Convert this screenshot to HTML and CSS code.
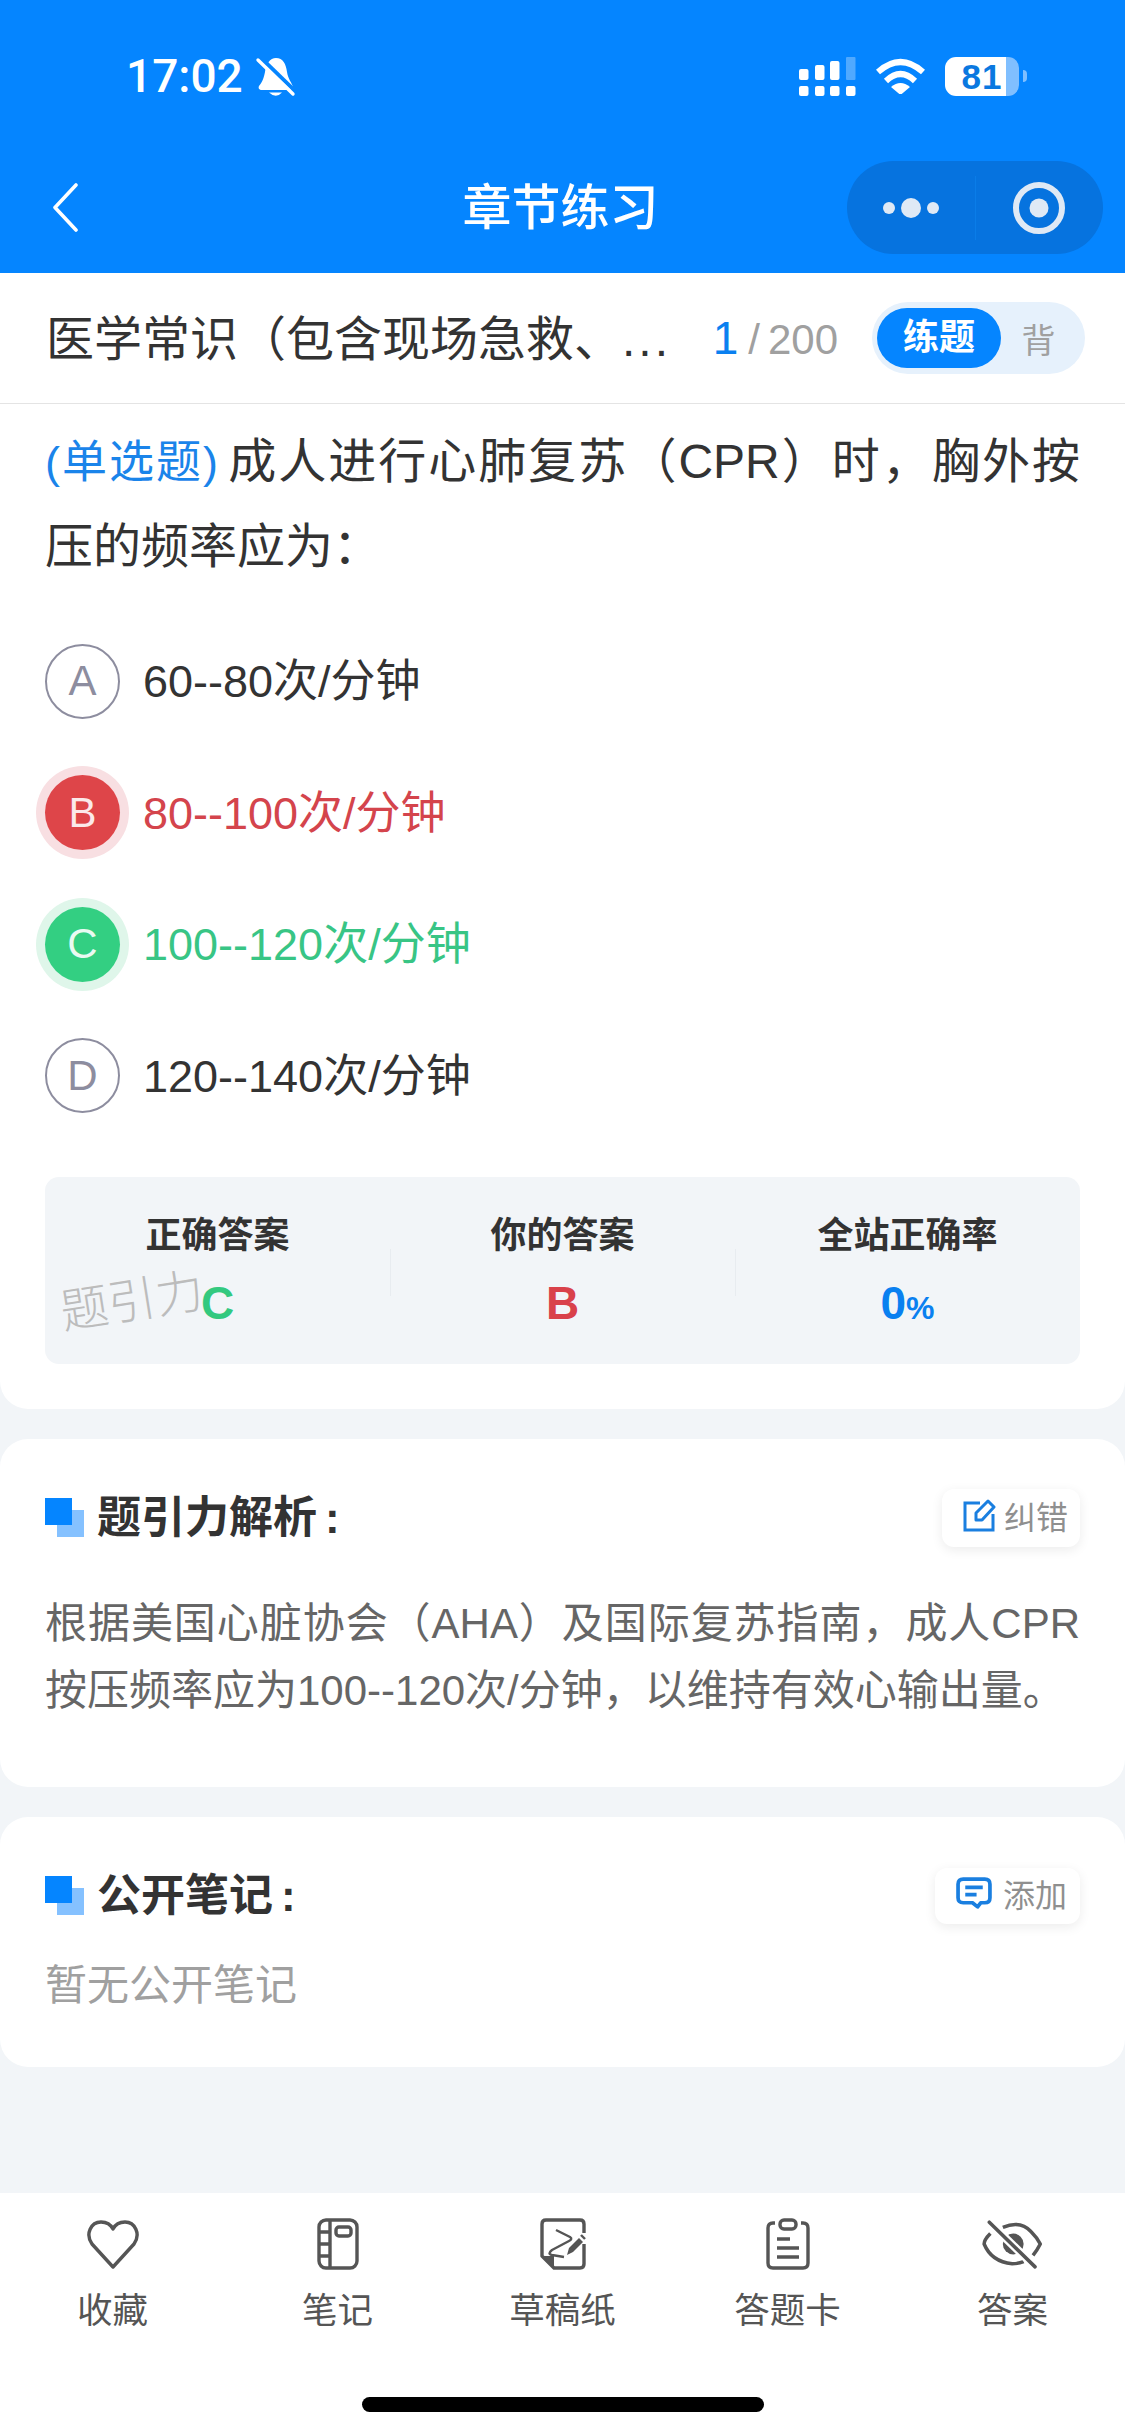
FILE: index.html
```html
<!DOCTYPE html>
<html lang="zh-CN">
<head>
    <meta charset="UTF-8">
    <meta name="viewport" content="width=device-width, initial-scale=1.0">
    <title>章节练习</title>
    <link rel="stylesheet" href="styles.css">
</head>
<body>
    <header class="topbar">
        <div class="status">
            <div class="status-left">
                <span class="time">17:02</span>
                <svg class="bell" viewBox="0 0 70 60">
                    <path fill="#fff" d="M36 12C43 12 46 18 47 26C48 33 52 37 53 41C53 43 52 44 50 44L22 44C19 44 18 42 19 40C23 35 24 31 25 26C26 18 30 12 36 12Z"/>
                    <path fill="#fff" d="M29 46.500Q36 53 42 46.500Z"/>
                    <path stroke="#0585ff" stroke-width="4" d="M21 12L56 46"/>
                    <path stroke="#fff" stroke-width="3.400" stroke-linecap="round" d="M18 14L53 48"/>
                </svg>
            </div>
            <div class="status-right">
                <svg class="signal" viewBox="0 0 57 39" fill="#fff">
                    <rect x="0" y="12" width="9.500" height="11" rx="2"/>
                    <rect x="16" y="8" width="9.500" height="15" rx="2"/>
                    <rect x="31" y="4" width="9.500" height="19" rx="2"/>
                    <rect x="47" y="0" width="9.500" height="23" rx="1" fill-opacity="0.3"/>
                    <rect x="0" y="29" width="9.500" height="10" rx="2"/>
                    <rect x="16" y="29" width="9.500" height="10" rx="2"/>
                    <rect x="31" y="29" width="9.500" height="10" rx="2"/>
                    <rect x="47" y="29" width="9.500" height="10" rx="2"/>
                </svg>
                <svg class="wifi" viewBox="0 0 51 36" fill="none" stroke="#fff" stroke-width="6">
                    <path d="M3 14Q25.500 -6 48 14"/>
                    <path d="M11 23Q25.500 9 40 23"/>
                    <path fill="#fff" stroke="none" d="M16 29Q25.500 21 35 29L25.500 37Z"/>
                </svg>
                <div class="battery"><span class="battery-level">81</span></div>
                <span class="battery-tip"></span>
            </div>
        </div>
        <nav class="navbar">
            <svg class="back" viewBox="0 0 26 49" fill="none" stroke="#fff" stroke-width="3.600" stroke-linecap="round" stroke-linejoin="round">
                <path d="M24 2L3 24.500L24 47"/>
            </svg>
            <h1 class="nav-title">章节练习</h1>
            <div class="capsule">
                <svg class="capsule-more" viewBox="0 0 64 20" fill="#dfe9f5">
                    <circle cx="10" cy="10" r="6"/>
                    <circle cx="32" cy="10" r="10"/>
                    <circle cx="54" cy="10" r="6"/>
                </svg>
                <svg class="capsule-close" viewBox="0 0 52 52" fill="none" stroke="#dfe9f5" stroke-width="6">
                    <circle cx="26" cy="26" r="23"/>
                    <circle cx="26" cy="26" r="9.500" fill="#dfe9f5" stroke="none"/>
                </svg>
            </div>
        </nav>
    </header>

    <div class="subbar">
        <div class="chapter">医学常识（包含现场急救、<span class="chapter-more">...</span></div>
        <div class="counter"><span class="counter-now">1</span><span class="counter-slash">/</span>200</div>
        <div class="mode">
            <span class="mode-on">练题</span>
            <span class="mode-off">背</span>
        </div>
    </div>

    <section class="question">
        <p class="stem"><span class="stem-type">(单选题)</span>成人进行心肺复苏（CPR）时，胸外按压的频率应为：</p>
        <ul class="options">
            <li class="option"><span class="letter">A</span><span class="option-text">60--80次/分钟</span></li>
            <li class="option wrong"><span class="letter">B</span><span class="option-text">80--100次/分钟</span></li>
            <li class="option right"><span class="letter">C</span><span class="option-text">100--120次/分钟</span></li>
            <li class="option"><span class="letter">D</span><span class="option-text">120--140次/分钟</span></li>
        </ul>
        <div class="stats">
            <div class="stat">
                <div class="stat-label">正确答案</div>
                <div class="stat-value green">C</div>
            </div>
            <div class="stat">
                <div class="stat-label">你的答案</div>
                <div class="stat-value red">B</div>
            </div>
            <div class="stat">
                <div class="stat-label">全站正确率</div>
                <div class="stat-value blue">0<small>%</small></div>
            </div>
            <span class="watermark">题引力</span>
        </div>
    </section>

    <section class="card">
        <div class="card-head">
            <h2 class="card-title"><span class="squares"></span>题引力解析<span class="colon">:</span></h2>
            <a class="mini-btn">
                <svg class="mini-icon" viewBox="0 0 33 33" fill="none" stroke="#1a7fe0" stroke-width="3">
                    <path d="M17 4H2V31H30V15"/>
                    <path stroke-linejoin="round" d="M13 21V14L25 2L31 8L19 21Z"/>
                </svg>
                纠错
            </a>
        </div>
        <p class="analysis">根据美国心脏协会（AHA）及国际复苏指南，成人CPR按压频率应为100--120次/分钟，以维持有效心输出量。</p>
    </section>

    <section class="card notes">
        <div class="card-head">
            <h2 class="card-title"><span class="squares"></span>公开笔记<span class="colon">:</span></h2>
            <a class="mini-btn add">
                <svg class="mini-icon wide" viewBox="0 0 35 31" fill="none" stroke="#1a7fe0" stroke-width="3.600" stroke-linejoin="round">
                    <path d="M7 2H28Q33 2 33 7V20Q33 25 28 25H24L21 29L16 25H7Q2 25 2 20V7Q2 2 7 2Z"/>
                    <path d="M9 10H26M9 17H20"/>
                </svg>
                添加
            </a>
        </div>
        <p class="empty">暂无公开笔记</p>
    </section>

    <footer class="tabbar">
        <div class="tabs">
            <div class="tab">
                <svg class="tab-icon" viewBox="0 0 56 52">
                    <path d="M28 49L7 26C0 16 6 4 16 4C22 4 26 7 28 11C30 7 34 4 40 4C50 4 56 16 49 26Z"/>
                </svg>
                <span>收藏</span>
            </div>
            <div class="tab">
                <svg class="tab-icon" viewBox="0 0 44 52">
                    <rect x="3" y="2" width="38" height="48" rx="7"/>
                    <path d="M14 2V50M3 14H14M3 26H14M3 38H14"/>
                    <rect x="20" y="9" width="15" height="9" rx="3"/>
                </svg>
                <span>笔记</span>
            </div>
            <div class="tab">
                <svg class="tab-icon" viewBox="18 12 48 52">
                    <path d="M63 27V18Q63 14 59 14H25Q21 14 21 18V50L33 62H59Q63 62 63 58V38"/>
                    <path fill="#555" stroke="none" d="M21 50H33V62Z"/>
                    <path stroke-width="2.400" d="M35 24L49 31Q52 33 48 35L31 44Q26 48 31 49L43 51"/>
                    <path fill="#555" stroke="none" d="M46 49L48 42L58 32L62 36L52 46Z"/>
                    <path stroke-width="2.400" d="M60 29L64 33"/>
                </svg>
                <span>草稿纸</span>
            </div>
            <div class="tab">
                <svg class="tab-icon" viewBox="0 0 44 52">
                    <path d="M9 5H7Q2 5 2 10V45Q2 50 7 50H37Q42 50 42 45V10Q42 5 37 5H35"/>
                    <rect x="14" y="2" width="16" height="9" rx="4"/>
                    <path d="M11 21H24M11 30H33M11 39H33"/>
                </svg>
                <span>答题卡</span>
            </div>
            <div class="tab">
                <svg class="tab-icon" viewBox="12 8 60 50">
                    <path d="M33 17Q50 10 60 21Q66 27 69 33Q66 39 62 44M21 23Q15 29 15 33Q22 50 42 52Q48 52 53 50"/>
                    <circle cx="43" cy="33" r="10" fill="#555" stroke="none"/>
                    <path stroke="#fff" stroke-width="8" d="M20 12L64 55"/>
                    <path stroke-linecap="round" d="M20 12L64 55"/>
                </svg>
                <span>答案</span>
            </div>
        </div>
        <div class="home-bar"></div>
    </footer>
</body>
</html>
```

FILE: styles.css
```css
* {
    box-sizing: border-box;
}
body {
    margin: 0;
    height: 2436px;
    display: flex;
    flex-direction: column;
    background-color: #f2f5f8;
    color: #333;
    font-family: "Liberation Sans", "Noto Sans CJK SC", sans-serif;
}
p, ul, h1, h2 {
    margin: 0;
    padding: 0;
}

/* top blue area */
.topbar {
    background-color: #0585ff;
    color: white;
    height: 273px;
}
.status {
    height: 142px;
    padding: 10px 98px 0 126px;
    display: flex;
    justify-content: space-between;
    align-items: center;
}
.status-left {
    display: flex;
    align-items: center;
}
.time {
    font-family: Roboto, sans-serif;
    font-size: 46px;
    font-weight: 500;
    line-height: 1;
}
.bell {
    width: 70px;
    height: 60px;
    margin-left: -3px;
}
.status-right {
    display: flex;
    align-items: center;
}
.signal {
    width: 57px;
    height: 39px;
}
.wifi {
    width: 51px;
    height: 36px;
    margin-left: 19px;
}
.battery {
    width: 74px;
    height: 39px;
    margin-left: 19px;
    border-radius: 11px;
    background: linear-gradient(to right, white 82%, #80bfff 82%);
    text-align: center;
}
.battery-level {
    color: #0a78e0;
    font-size: 35px;
    font-weight: bold;
    letter-spacing: 1px;
    line-height: 39px;
}
.battery-tip {
    width: 4px;
    height: 12px;
    margin-left: 4px;
    background-color: #80bfff;
    border-radius: 0 6px 6px 0;
}
.navbar {
    height: 131px;
    padding: 0 22px 0 52px;
    display: grid;
    grid-template-columns: 1fr auto 1fr;
    align-items: center;
}
.back {
    width: 26px;
    height: 49px;
}
.nav-title {
    font-size: 49px;
    font-weight: 500;
    line-height: 60px;
    padding-right: 34px;
}
.capsule {
    justify-self: end;
    width: 256px;
    height: 93px;
    border-radius: 47px;
    background-color: #0673df;
    display: grid;
    grid-template-columns: 128px 128px;
    align-items: center;
    justify-items: center;
    background-image: linear-gradient(#0a7de8, #0a7de8);
    background-size: 1px 64px;
    background-position: 128px center;
    background-repeat: no-repeat;
}
.capsule-more {
    width: 64px;
    height: 20px;
}
.capsule-close {
    width: 52px;
    height: 52px;
}

/* chapter row */
.subbar {
    height: 131px;
    padding: 0 40px 0 46px;
    background-color: white;
    border-bottom: 1px solid #e4e4e4;
    display: flex;
    align-items: center;
}
.chapter {
    flex: 1;
    padding-bottom: 6px;
    font-size: 48px;
    white-space: nowrap;
}
.chapter-more {
    letter-spacing: 3px;
}
.counter {
    margin-right: 34px;
    color: #a0a0a0;
    font-size: 42px;
}
.counter-now {
    color: #0a80f0;
    font-size: 46px;
}
.counter-slash {
    margin: 0 8px 0 10px;
}
.mode {
    width: 213px;
    height: 72px;
    padding: 6px 5px;
    border-radius: 36px;
    background-color: #e6f1fc;
    display: flex;
    align-items: center;
}
.mode-on {
    width: 124px;
    height: 60px;
    border-radius: 30px;
    background-color: #0585ff;
    color: white;
    font-size: 36px;
    font-weight: bold;
    line-height: 60px;
    text-align: center;
}
.mode-off {
    flex: 1;
    padding-right: 4px;
    color: #a0a0a0;
    font-size: 34px;
    text-align: center;
}

/* question */
.question {
    background-color: white;
    border-radius: 0 0 28px 28px;
    padding: 16px 45px 45px;
}
.stem {
    font-size: 48px;
    line-height: 84px;
    text-align: justify;
}
.stem-type {
    margin-right: 8px;
    color: #1a84ea;
    font-size: 45px;
}
.options {
    list-style-type: none;
    margin-top: 26.500px;
}
.option {
    height: 131.500px;
    display: flex;
    align-items: center;
    font-size: 45px;
}
.option-text {
    padding-bottom: 7px;
}
.letter {
    width: 75px;
    height: 75px;
    margin-right: 23px;
    border: 2.500px solid #8d8d9f;
    border-radius: 50%;
    color: #8d8d9f;
    font-size: 42px;
    display: flex;
    align-items: center;
    justify-content: center;
}
.wrong {
    color: #d4444c;
}
.wrong .letter {
    border: none;
    background-color: #de4549;
    box-shadow: 0 0 0 9px #f8dfe2;
    color: #fbe9ea;
}
.right {
    color: #38c585;
}
.right .letter {
    border: none;
    background-color: #33cf82;
    box-shadow: 0 0 0 9px #dff6ea;
    color: #eafaf2;
}
.stats {
    position: relative;
    height: 187px;
    margin-top: 35px;
    padding-top: 35px;
    border-radius: 14px;
    background-color: #f2f5f8;
    display: grid;
    grid-template-columns: repeat(3, 1fr);
    text-align: center;
}
.stat {
    position: relative;
}
.stat + .stat::before {
    content: "";
    position: absolute;
    left: 0;
    top: 37px;
    height: 47px;
    border-left: 1px solid #e8ecf0;
}
.stat-label {
    font-size: 36px;
    font-weight: bold;
    line-height: 48px;
}
.stat-value {
    margin-top: 13px;
    font-size: 46px;
    font-weight: bold;
    line-height: 60px;
}
.stat-value small {
    font-size: 32px;
}
.green {
    color: #33c97f;
}
.red {
    color: #d9414a;
}
.blue {
    color: #0a80f0;
}
.watermark {
    position: absolute;
    left: 15px;
    top: 95px;
    color: #bcbcbc;
    font-size: 48px;
    line-height: 60px;
    font-weight: 300;
    transform: rotate(-9deg);
}

/* analysis and notes */
.card {
    margin-top: 30px;
    padding: 50px 45px 63px;
    background-color: white;
    border-radius: 28px;
}
.card-head {
    display: flex;
    justify-content: space-between;
    align-items: center;
    height: 58px;
}
.card-title {
    display: flex;
    align-items: center;
    font-size: 44px;
    line-height: 58px;
}
.squares {
    position: relative;
    width: 39px;
    height: 39px;
    margin-right: 13px;
    background-color: #85c1ff;
    background-image: linear-gradient(#0585ff, #0585ff);
    background-size: 27px 27px;
    background-repeat: no-repeat;
    clip-path: polygon(0 0, 27px 0, 27px 12px, 39px 12px, 39px 39px, 12px 39px, 12px 27px, 0 27px);
}
.colon {
    margin-left: 8px;
}
.mini-btn {
    width: 138px;
    height: 58px;
    padding: 0 0 5px 21px;
    border-radius: 12px;
    background-color: white;
    box-shadow: 0 3px 12px rgba(0, 0, 0, 0.08);
    color: #8f8f8f;
    font-size: 32px;
    display: flex;
    align-items: center;
    gap: 8px;
}
.mini-btn.add {
    width: 145px;
    height: 56px;
    padding-left: 21px;
    gap: 11px;
}
.mini-icon {
    width: 33px;
    height: 33px;
}
.mini-icon.wide {
    width: 36px;
    height: 32px;
}
.analysis {
    margin-top: 43px;
    color: #666;
    font-size: 42px;
    line-height: 67px;
    text-align: justify;
}
.notes {
    padding-bottom: 51px;
}
.empty {
    margin-top: 31px;
    color: #a0a0a0;
    font-size: 42px;
    line-height: 60px;
}

/* bottom tabs */
.tabbar {
    margin-top: auto;
    height: 243px;
    padding-top: 25px;
    background-color: white;
}
.tabs {
    display: grid;
    grid-template-columns: repeat(5, 225px);
}
.tab {
    display: flex;
    flex-direction: column;
    align-items: center;
    color: #555;
    font-size: 35.500px;
    line-height: 44px;
}
.tab span {
    margin-top: 19px;
}
.tab-icon {
    height: 52px;
    fill: none;
    stroke: #555;
    stroke-width: 3.400;
    stroke-linejoin: round;
}
.home-bar {
    width: 402px;
    height: 15px;
    margin: 64px auto 0;
    border-radius: 8px;
    background-color: black;
}
```
